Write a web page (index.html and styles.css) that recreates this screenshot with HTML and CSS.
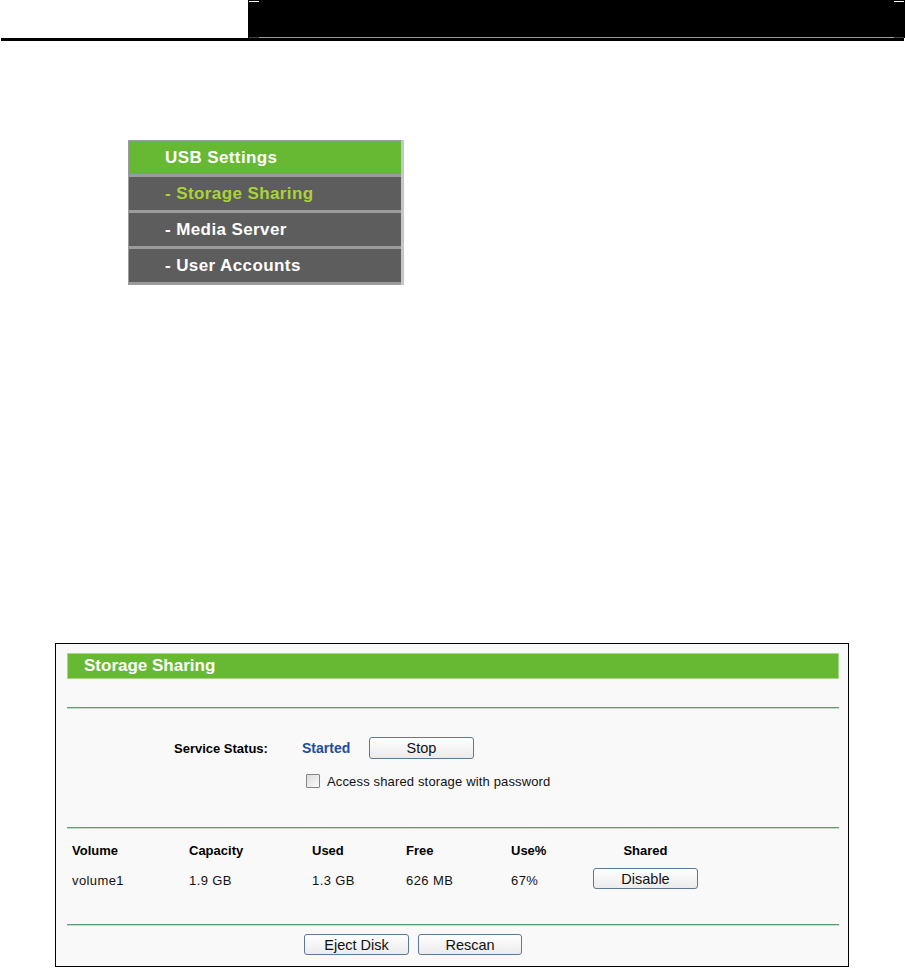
FILE: index.html
```html
<!DOCTYPE html>
<html lang="en">
<head>
<meta charset="utf-8">
<title>Storage Sharing</title>
<link rel="stylesheet" href="styles.css">
</head>
<body>
<header class="topbar">
  <div class="topbar-blank"></div>
  <div class="topbar-black"></div>
</header>
<div class="rule"></div>

<nav class="menu">
  <div class="menu-row menu-head">USB Settings</div>
  <div class="menu-row menu-active">- Storage Sharing</div>
  <div class="menu-row">- Media Server</div>
  <div class="menu-row">- User Accounts</div>
</nav>

<section class="panel">
  <div class="panel-title">Storage Sharing</div>
  <div class="divider first"></div>

  <div class="service-row">
    <span class="label">Service Status:</span>
    <span class="status">Started</span>
    <button class="btn">Stop</button>
  </div>
  <div class="check-row">
    <input type="checkbox" class="check" id="pw">
    <label for="pw">Access shared storage with password</label>
  </div>

  <div class="divider second"></div>

  <div class="vol-table">
    <div class="th">Volume</div>
    <div class="th">Capacity</div>
    <div class="th">Used</div>
    <div class="th">Free</div>
    <div class="th">Use%</div>
    <div class="th center">Shared</div>

    <div class="td">volume1</div>
    <div class="td">1.9 GB</div>
    <div class="td">1.3 GB</div>
    <div class="td">626 MB</div>
    <div class="td">67%</div>
    <div class="td center"><button class="btn btn-sm">Disable</button></div>
  </div>

  <div class="divider third"></div>

  <div class="actions">
    <button class="btn btn-sm">Eject Disk</button>
    <button class="btn btn-sm btn-narrow">Rescan</button>
  </div>
</section>
</body>
</html>
```

FILE: styles.css
```css
html, body {
  margin: 0;
  padding: 0;
  background: #ffffff;
}

body {
  font-family: "Liberation Sans", Arial, sans-serif;
  color: #000;
}

/* ---- top bar ---- */
.topbar {
  display: flex;
  height: 38px;
}

.topbar-blank {
  width: 248px;
  flex: none;
}

.topbar-black {
  flex: 1;
  background: #000;
  position: relative;
}

.topbar-black::before {
  content: "";
  position: absolute;
  top: 1px;
  left: 1px;
  right: 1px;
  height: 1px;
  background: linear-gradient(to right, #fff 0 10px, transparent 10px calc(100% - 10px), #fff calc(100% - 10px));
}

.topbar-black::after {
  content: "";
  position: absolute;
  bottom: 0;
  left: 1px;
  right: 1px;
  height: 1px;
  background: linear-gradient(to right, #444 0 10px, #9a9a9a 10px calc(100% - 10px), #444 calc(100% - 10px));
}

.rule {
  height: 3px;
  margin: 0 1px;
  background: #000;
}

/* ---- menu ---- */
.menu {
  margin: 99px 0 0 128px;
  width: 276px;
  box-sizing: border-box;
  background: #9b9b9b;
  padding: 1px 0 3px 1px;
  border-right: 3px solid #c6c6c6;
  display: flex;
  flex-direction: column;
  gap: 3px;
}

.menu-row {
  height: 33px;
  line-height: 33px;
  padding-left: 36px;
  background: #5d5d5d;
  color: #fff;
  font-size: 17px;
  font-weight: bold;
  letter-spacing: 0.4px;
  white-space: nowrap;
}

.menu-head {
  background: #67b933;
}

.menu-active {
  color: #a9d336;
}

/* ---- panel ---- */
.panel {
  margin: 358px 0 0 55px;
  width: 794px;
  box-sizing: border-box;
  border: 1px solid #000;
  background: #f9f9f9;
  padding: 9px 9px 11px 11px;
}

.panel-title {
  height: 26px;
  box-sizing: border-box;
  border: 1px solid #a6d688;
  background: #67b933;
  color: #fff;
  font-size: 17px;
  font-weight: bold;
  line-height: 24px;
  padding-left: 16px;
}

.divider {
  height: 2px;
  box-sizing: border-box;
  border-top: 1px solid #5d9c72;
  border-bottom: 1px solid #c3dccb;
}

.divider.first { margin-top: 28px; }
.divider.second { margin-top: 38px; }
.divider.third { margin-top: 34px; }

.service-row {
  margin-top: 28px;
  height: 22px;
  display: flex;
  align-items: center;
  padding-left: 107px;
}

.label {
  width: 128px;
  font-size: 13px;
  font-weight: bold;
}

.status {
  width: 67px;
  font-size: 14px;
  font-weight: bold;
  color: #1e4c9e;
}

.check-row {
  margin-top: 14px;
  height: 16px;
  display: flex;
  align-items: center;
  padding-left: 235px;
  font-size: 13px;
  letter-spacing: 0.15px;
  color: #111;
}

.check {
  appearance: none;
  -webkit-appearance: none;
  margin: 0 7px 0 4px;
  width: 14px;
  height: 14px;
  box-sizing: border-box;
  border: 1px solid #858585;
  border-radius: 1px;
  background: linear-gradient(135deg, #dcdcdc, #fbfbfb);
}

/* ---- buttons ---- */
.btn {
  width: 105px;
  height: 22px;
  padding: 0;
  box-sizing: border-box;
  border: 1px solid #5a7a9c;
  border-radius: 3px;
  background: linear-gradient(#ffffff, #ebebeb);
  font-family: "Liberation Sans", Arial, sans-serif;
  font-size: 14.5px;
  color: #111;
}

.btn-sm {
  height: 21px;
}

.btn-narrow {
  width: 104px;
}

/* ---- volume table ---- */
.vol-table {
  margin-top: 12px;
  padding-left: 5px;
  display: grid;
  grid-template-columns: 117px 123px 94px 105px 82px 105px;
  grid-template-rows: 20px 23px;
  row-gap: 6px;
  font-size: 13px;
  align-items: center;
}

.th {
  font-weight: bold;
  line-height: 20px;
}

.td {
  color: #111;
  letter-spacing: 0.4px;
  padding-top: 3px;
}

.td.center {
  padding-top: 0;
  letter-spacing: 0;
}

.center {
  text-align: center;
}

/* ---- bottom actions ---- */
.actions {
  margin-top: 8px;
  padding-left: 237px;
  display: flex;
  gap: 9px;
}
```
